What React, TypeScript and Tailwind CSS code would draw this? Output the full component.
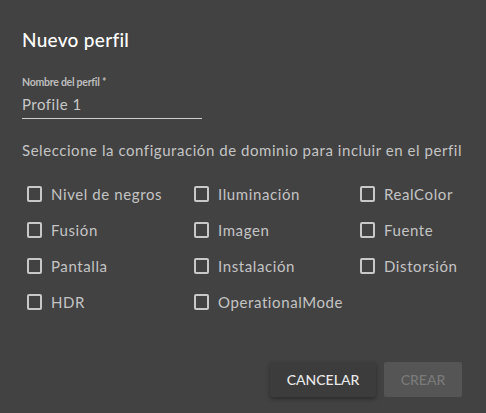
const options = [
  "Nivel de negros",
  "Iluminación",
  "RealColor",
  "Fusión",
  "Imagen",
  "Fuente",
  "Pantalla",
  "Instalación",
  "Distorsión",
  "HDR",
  "OperationalMode",
];

const Checkbox = ({ label }: { label: string }) => (
  <label className="flex h-9 items-center gap-[9px]">
    <span className="h-4 w-[15px] rounded-[2px] border-2 border-[#c8c8c8]" />
    <span className="text-[15px] tracking-[0.6px] text-[#c4c4c4]">{label}</span>
  </label>
);

const App = () => {
  return (
    <div
      className="flex h-[413px] w-[486px] flex-col bg-[#424242] px-[22px] pt-[28px]"
      style={{ fontFamily: "Lato, 'Open Sans', sans-serif" }}
    >
      <h2 className="text-[19px] leading-6 font-medium tracking-[0.3px] text-white">Nuevo perfil</h2>

      <div className="mt-[22px] w-[180px]">
        <p className="text-[10.5px] leading-4 font-bold tracking-[-0.25px] text-[#bdbdbd]">Nombre del perfil *</p>
        <p className="mt-[4px] pb-[4px] text-[15px] leading-5 tracking-[0.5px] text-[#c8c8c8]">Profile 1</p>
        <div className="h-px bg-[#d0d0d0]" />
      </div>

      <p className="mt-[21px] text-[15px] leading-5 tracking-[0.55px] text-[#c4c4c4]">
        Seleccione la configuración de dominio para incluir en el perfil
      </p>

      <div className="mt-[16px] grid grid-cols-[167px_166px_1fr] pl-[5px]">
        {options.map((o) => (
          <Checkbox key={o} label={o} />
        ))}
      </div>

      <div className="mt-auto mb-[16px] flex justify-end gap-[8px] pr-[2px]">
        <button className="h-[35px] w-[106px] rounded-[2px] bg-[#3c3c3c] text-[14px] font-medium text-[#e8e8e8] shadow-[0_2px_4px_rgba(0,0,0,0.35)]">
          CANCELAR
        </button>
        <button className="h-[35px] w-[78px] rounded-[2px] bg-[#555555] text-[14px] font-medium text-[#7a7a7a]">
          CREAR
        </button>
      </div>
    </div>
  );
};

export default App;
